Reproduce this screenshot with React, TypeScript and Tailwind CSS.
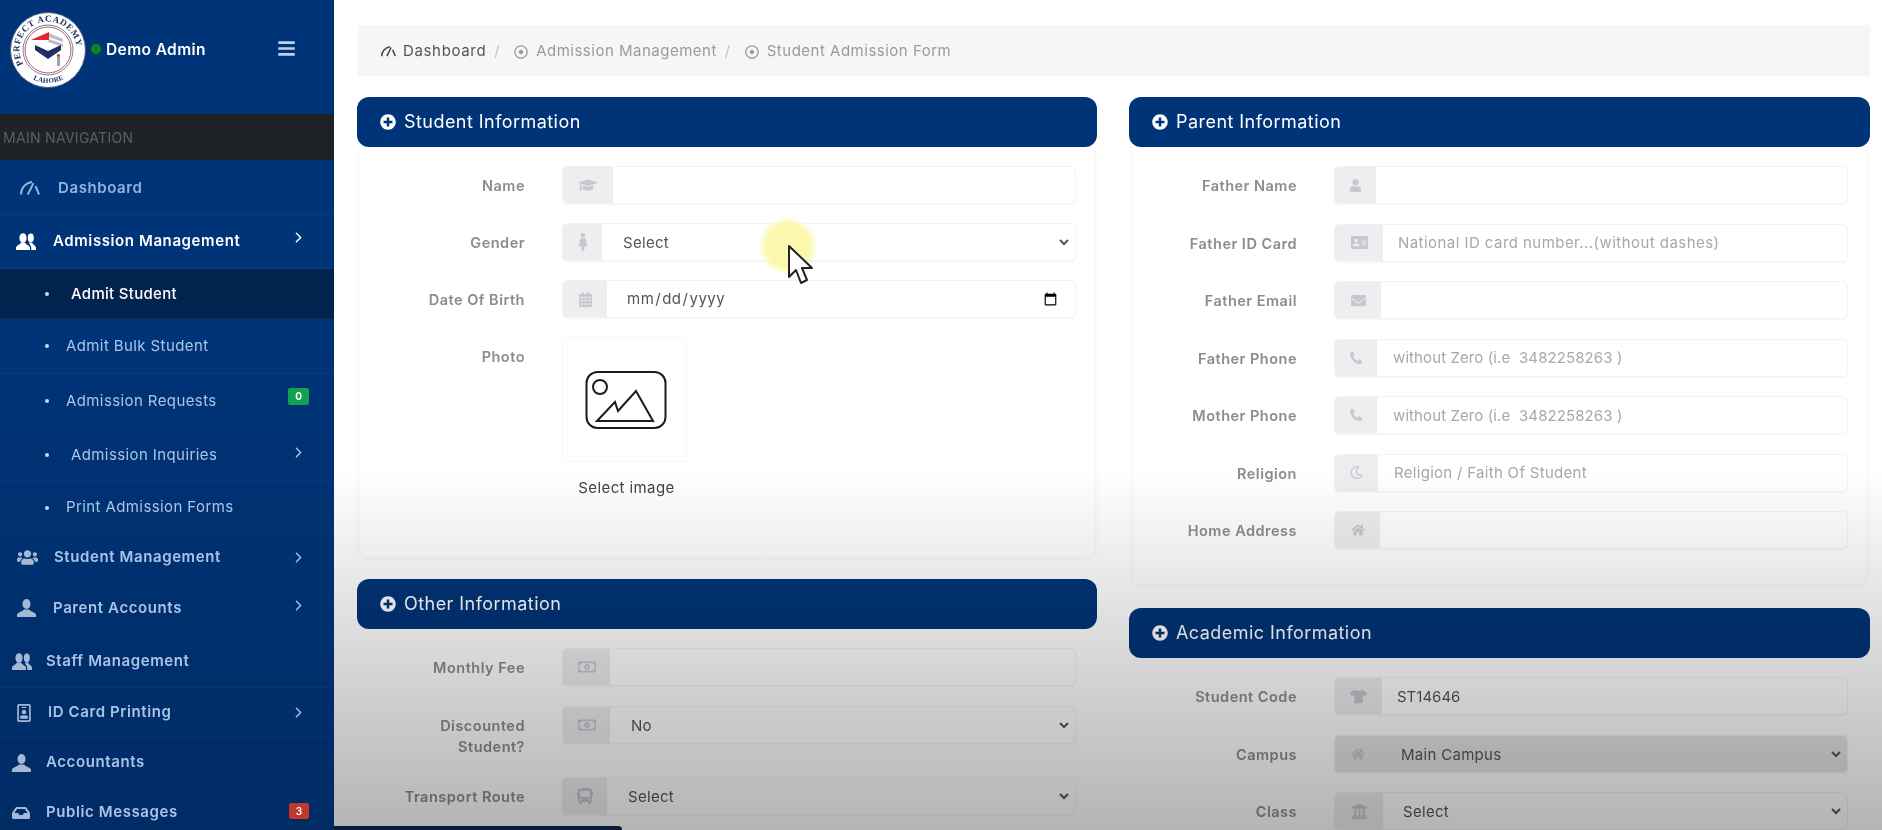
import type { ReactNode } from 'react';
import { ChevronRight } from 'lucide-react';
import {
  FaAddressCard,
  FaBars,
  FaBus,
  FaCalendarAlt,
  FaEnvelope,
  FaFemale,
  FaGraduationCap,
  FaHome,
  FaInbox,
  FaPhoneAlt,
  FaPlusCircle,
  FaRegDotCircle,
  FaRegIdBadge,
  FaRegMoneyBillAlt,
  FaRegMoon,
  FaTshirt,
  FaUniversity,
  FaUser,
  FaUsers,
} from 'react-icons/fa';

function Logo() {
  return (
    <svg width="76" height="76" viewBox="0 0 76 76" className="shrink-0">
      <defs>
        <path id="seal-top" d="M 13.3 52.3 A 28.5 28.5 0 1 1 62.7 52.3" />
        <path id="seal-bottom" d="M 14.7 61.3 A 33 33 0 0 0 61.3 61.3" />
      </defs>
      <circle cx="38" cy="38" r="37.5" fill="#ffffff" stroke="#4a5a86" strokeWidth="1" />
      <circle cx="38" cy="38" r="25" fill="#ffffff" stroke="#1d2f63" strokeWidth="0.6" />
      <circle cx="38" cy="38" r="23" fill="none" stroke="#c0565a" strokeWidth="1" />
      <text fontFamily="'Liberation Serif', serif" fontSize="9" fontWeight="700" fill="#1d2f63" letterSpacing="0.7">
        <textPath href="#seal-top">PERFECT ACADEMY</textPath>
      </text>
      <text fontFamily="'Liberation Serif', serif" fontSize="7" fontWeight="700" fill="#1d2f63" letterSpacing="0.3">
        <textPath href="#seal-bottom" startOffset="20%">LAHORE</textPath>
      </text>
      <path d="M21 28 L39 20 L39 28 Z" fill="#e0262e" />
      <path d="M39 21 L53 27 L53 30 L39 25 Z M39 27 L53 32 L53 35 L38 30 Z" fill="#b9bcc4" />
      <path d="M25 33 L38 39 L51 33 L51 38 L38 47 L25 38 Z" fill="#1d2f63" />
      <rect x="47" y="45" width="3" height="9" fill="#9aa3b5" />
      <circle cx="48.5" cy="43.5" r="1.5" fill="#e0262e" />
    </svg>
  );
}

function Gauge({ className }: { className: string }) {
  return (
    <svg viewBox="0 0 20 14" fill="none" stroke="currentColor" strokeWidth="2" className={className}>
      <path d="M1 13.5 C1 7 5.5 2 12 1" />
      <path d="M7.8 13.5 L13.5 2" />
      <path d="M15.5 5 L19 13.5" />
    </svg>
  );
}

function Bust({ className }: { className: string }) {
  return (
    <svg width="19" height="18" viewBox="0 0 19 18" fill="currentColor" className={`shrink-0 ${className}`}>
      <ellipse cx="9.5" cy="5" rx="4" ry="5" />
      <path d="M0 18 L0 15.5 C1 13 5 13 7 10.5 L12 10.5 C14 13 18 13 19 15.5 L19 18 Z" />
    </svg>
  );
}

function TwoUsers({ className }: { className: string }) {
  return (
    <svg width="20" height="17" viewBox="0 0 20 17" fill="currentColor" className={`shrink-0 ${className}`}>
      <ellipse cx="7" cy="5" rx="3.6" ry="4.8" />
      <path d="M0 17 L0 14.5 C0.8 12 4 12 5 9.5 L9 9.5 C10 12 13.2 12 14 14.5 L14 17 Z" />
      <ellipse cx="14.8" cy="5" rx="3" ry="4.4" />
      <path d="M15.2 17 L20 17 L20 14.5 C19.2 12.2 17 12 16 9.5 L13 9.5 C13 11 14.8 12 15.2 14.5 Z" />
    </svg>
  );
}

type NavItem = {
  label: string;
  height: string;
  rowClass: string;
  textClass: string;
  icon?: ReactNode;
  chevron?: string;
  badge?: ReactNode;
};

const mainText = 'font-semibold text-[15px] tracking-[0.6px] text-[#a9c4e6]';
const subText = 'font-normal text-[15px] tracking-[0.4px] text-[#a9c5ea]';

const navItems: NavItem[] = [
  { label: 'Dashboard', height: 'h-[54px]', rowClass: 'pl-[20px] gap-[18px]', textClass: 'mt-[2px] font-semibold text-[15px] tracking-[0.6px] text-[#8fb3e2]', icon: <Gauge className="w-[20px] shrink-0 text-[#8fb3e2]" /> },
  { label: 'Admission Management', height: 'h-[54px]', rowClass: 'pl-[16px] gap-[17px]', textClass: 'font-semibold text-[15px] tracking-[0.6px] text-white', icon: <TwoUsers className="text-white" />, chevron: '-translate-y-[4px] text-white' },
  { label: 'Admit Student', height: 'h-[50px] bg-[#03234f]', rowClass: 'pl-[45px] gap-[22px]', textClass: 'mt-[1px] font-medium text-[15px] tracking-[0.3px] text-white' },
  { label: 'Admit Bulk Student', height: 'h-[55px]', rowClass: 'pl-[45px] gap-[17px]', textClass: `mt-[1px] ${subText}` },
  { label: 'Admission Requests', height: 'h-[55px]', rowClass: 'pl-[45px] gap-[17px]', textClass: subText, badge: <span className="absolute top-[14px] left-[288px] flex h-[17px] w-[21px] items-center justify-center rounded-[2px] bg-[#12a150] text-[10px] font-bold text-white">0</span> },
  { label: 'Admission Inquiries', height: 'h-[53px]', rowClass: 'pl-[45px] gap-[22px]', textClass: subText, chevron: '-translate-y-[3px] text-[#a9c5ea]' },
  { label: 'Print Admission Forms', height: 'h-[52px]', rowClass: 'pl-[45px] gap-[17px]', textClass: subText },
  { label: 'Student Management', height: 'h-[48px]', rowClass: 'pl-[17px] gap-[16px]', textClass: mainText, icon: <FaUsers className="size-[21px] text-[#a5b9d6]" />, chevron: 'text-[#a9c4e6]' },
  { label: 'Parent Accounts', height: 'h-[53px]', rowClass: 'pl-[17px] gap-[17px]', textClass: mainText, icon: <Bust className="text-[#a5b9d6]" />, chevron: '-translate-y-[3px] text-[#a9c4e6]' },
  { label: 'Staff Management', height: 'h-[53px]', rowClass: 'pl-[12px] gap-[14px]', textClass: mainText, icon: <TwoUsers className="text-[#a5b9d6]" /> },
  { label: 'ID Card Printing', height: 'h-[50px]', rowClass: 'pl-[15px] gap-[15px]', textClass: mainText, icon: <FaRegIdBadge className="size-[18px] text-[#a5b9d6]" />, chevron: 'text-[#a9c4e6]' },
  { label: 'Accountants', height: 'h-[50px]', rowClass: 'pl-[12px] gap-[15px]', textClass: mainText, icon: <Bust className="text-[#a5b9d6]" /> },
  { label: 'Public Messages', height: 'h-[50px]', rowClass: 'pl-[12px] gap-[16px]', textClass: mainText, icon: <FaInbox className="size-[18px] text-[#a5b9d6]" />, badge: <span className="absolute top-[15px] left-[289px] flex h-[16px] w-[20px] items-center justify-center rounded-[2px] bg-[#c0392b] text-[10px] font-semibold text-white">3</span> },
];

function Sidebar() {
  return (
    <aside className="h-full w-[334px] shrink-0 bg-gradient-to-b from-[#003478] from-40% to-[#002c66]">
      <div className="flex h-[114px] items-start pt-[12px] pr-[38px] pl-[10px]">
        <Logo />
        <span className="mt-[32px] ml-[5px] size-[10px] rounded-full bg-[#0a8a1e]" />
        <span className="mt-[27px] ml-[5px] text-[15.5px] leading-[22px] font-semibold tracking-[0.4px] text-white">Demo Admin</span>
        <FaBars className="mt-[27px] ml-auto size-[19px] text-[#bcd2ef]" />
      </div>
      <div className="flex h-[46px] items-center bg-[#1f2226] pl-[3px] text-[14px] tracking-[0.3px] text-[#5b6068]">MAIN NAVIGATION</div>
      <nav className="pt-[1px]">
        {navItems.map((item) => (
          <div key={item.label} className={`relative flex items-center border-b border-white/[0.03] ${item.height} ${item.rowClass}`}>
            {item.icon ?? <span className="size-[4px] rounded-full bg-[#c5d8f0]" />}
            <span className={`whitespace-nowrap ${item.textClass}`}>{item.label}</span>
            {item.chevron && <ChevronRight strokeWidth={2} className={`absolute left-[290px] size-[17px] ${item.chevron}`} />}
            {item.badge}
          </div>
        ))}
      </nav>
    </aside>
  );
}

function CardHeader({ title }: { title: string }) {
  return (
    <div className="flex h-[50px] items-center gap-[8px] rounded-[12px] bg-[#003478] pb-[1px] pl-[23px] text-[18px] tracking-[0.45px] text-white">
      <FaPlusCircle className="size-[16px]" />
      {title}
    </div>
  );
}

const inputClass = 'h-full min-w-0 flex-1 bg-transparent text-[15px] text-[#555555] outline-none placeholder:text-[#a8a8a8]';

const labelClass = 'shrink-0 pt-[9px] text-right text-[14.5px] leading-[21px] font-semibold tracking-[0.5px] text-[#8c8c8c]';

function Row({ label, labelWidth, addon, icon, muted, children }: { label: ReactNode; labelWidth: string; addon: string; icon: ReactNode; muted?: boolean; children?: ReactNode }) {
  return (
    <div className="flex items-start gap-[37px]">
      <div className={`${labelWidth} ${labelClass}`}>{label}</div>
      <div className={`flex h-[38px] flex-1 overflow-hidden rounded-[5px] border border-[#f3f3f3] shadow-[0_1px_2px_rgba(0,0,0,0.04)] ${muted ? 'bg-[#e4e4e4]' : 'bg-white'}`}>
        <div className={`${addon} flex shrink-0 items-center justify-center ${muted ? '' : 'bg-[#eeeef0]'} text-[#c6c8d0]`}>{icon}</div>
        {children}
      </div>
    </div>
  );
}

function Field({ pad, placeholder, value }: { pad: string; placeholder?: string; value?: string }) {
  return <input readOnly placeholder={placeholder} value={value ?? ''} className={`${inputClass} ${pad}`} />;
}

function Choice({ pad, value }: { pad: string; value: string }) {
  return (
    <select defaultValue={value} className={`${inputClass} mr-[3px] pt-[1px] tracking-[0.3px] ${pad}`}>
      <option>{value}</option>
    </select>
  );
}

function Main() {
  const left = 'w-[165px]';
  const right = 'w-[164px]';
  return (
    <main className="min-w-0 flex-1 bg-white pt-[25px] pr-[12px] pl-[23px]">
      <div className="mb-[21px] ml-[1px] flex h-[51px] items-center bg-[#f6f6f7] pt-[2px] pl-[23px] text-[15px] tracking-[0.5px] text-[#9a9a9a]">
        <Gauge className="w-[15px] shrink-0 text-[#444444]" />
        <span className="ml-[7px] tracking-[0.65px] text-[#555555]">Dashboard</span>
        <span className="mx-[8px] text-[#c4c4c4]">/</span>
        <FaRegDotCircle className="ml-[6px] size-[14px]" />
        <span className="ml-[8px]">Admission Management</span>
        <span className="mx-[8px] text-[#c4c4c4]">/</span>
        <FaRegDotCircle className="ml-[6px] size-[14px]" />
        <span className="ml-[8px]">Student Admission Form</span>
      </div>

      <div className="grid grid-cols-[740px_741px] gap-x-[32px]">
        <div>
          <CardHeader title="Student Information" />
          <div className="mx-[3px] mb-[22px] flex h-[410px] flex-col gap-[19px] rounded-b-[8px] pt-[19px] pr-[18px] shadow-[0_1px_6px_rgba(0,0,0,0.06)]">
            <Row label="Name" labelWidth={left} addon="w-[50px]" icon={<FaGraduationCap className="size-[18px]" />}>
              <Field pad="px-4" />
            </Row>
            <Row label="Gender" labelWidth={left} addon="w-[39px]" icon={<FaFemale className="size-[18px]" />}>
              <Choice pad="pl-[17px]" value="Select" />
            </Row>
            <Row label="Date Of Birth" labelWidth={left} addon="w-[44px]" icon={<FaCalendarAlt className="size-[15px]" />}>
              <input type="date" className={`${inputClass} pt-[1px] pr-[15px] pl-[19px] tracking-[0.5px]`} />
            </Row>
            <div className="flex items-start gap-[37px]">
              <div className={`${left} ${labelClass}`}>Photo</div>
              <div className="w-[125px]">
                <div className="flex h-[125px] items-center justify-center border border-[#f7f7f7]">
                  <svg width="82" height="60" viewBox="0 0 82 60" fill="none" stroke="#1c1c1c" strokeWidth="2" className="translate-x-[1px]">
                    <rect x="1.5" y="2" width="79" height="56" rx="11" />
                    <ellipse cx="15" cy="17" rx="7" ry="7" />
                    <path d="M12 51 L30 32 L33 41 L51 21 L68 51 Z" />
                  </svg>
                </div>
                <div className="mt-[15px] translate-x-[2px] text-center text-[15px] tracking-[0.4px] whitespace-nowrap text-[#444444]">Select image</div>
              </div>
            </div>
          </div>

          <CardHeader title="Other Information" />
          <div className="mx-[3px] flex flex-col gap-[20px] pt-[19px] pr-[18px]">
            <Row label="Monthly Fee" labelWidth={left} addon="w-[47px]" icon={<FaRegMoneyBillAlt className="size-[18px]" />}>
              <Field pad="px-4" />
            </Row>
            <Row label={<>Discounted<br />Student?</>} labelWidth={left} addon="w-[47px]" icon={<FaRegMoneyBillAlt className="size-[18px]" />}>
              <Choice pad="pl-[17px]" value="No" />
            </Row>
            <Row label="Transport Route" labelWidth={left} addon="w-[44px]" icon={<FaBus className="size-[16px]" />}>
              <Choice pad="pl-[17px]" value="Select" />
            </Row>
          </div>
        </div>

        <div>
          <CardHeader title="Parent Information" />
          <div className="mx-[4px] mb-[23px] flex h-[438px] flex-col gap-[19.5px] rounded-b-[8px] pt-[19px] pr-[18px] shadow-[0_1px_6px_rgba(0,0,0,0.06)]">
            <Row label="Father Name" labelWidth={right} addon="w-[41px]" icon={<FaUser className="size-[13px]" />}>
              <Field pad="px-4" />
            </Row>
            <Row label="Father ID Card" labelWidth={right} addon="w-[48px]" icon={<FaAddressCard className="size-[17px]" />}>
              <Field pad="px-[15px] tracking-[0.45px]" placeholder="National ID card number...(without dashes)" />
            </Row>
            <Row label="Father Email" labelWidth={right} addon="w-[46px]" icon={<FaEnvelope className="size-[15px]" />}>
              <Field pad="px-4" />
            </Row>
            <Row label="Father Phone" labelWidth={right} addon="w-[42px]" icon={<FaPhoneAlt className="size-[12px]" />}>
              <Field pad="px-4 tracking-[0.1px]" placeholder="without Zero (i.e  3482258263 )" />
            </Row>
            <Row label="Mother Phone" labelWidth={right} addon="w-[42px]" icon={<FaPhoneAlt className="size-[12px]" />}>
              <Field pad="px-4 tracking-[0.1px]" placeholder="without Zero (i.e  3482258263 )" />
            </Row>
            <Row label="Religion" labelWidth={right} addon="w-[43px]" icon={<FaRegMoon className="size-[13px]" />}>
              <Field pad="px-4 tracking-[0.3px]" placeholder="Religion / Faith Of Student" />
            </Row>
            <Row label="Home Address" labelWidth={right} addon="w-[45px]" icon={<FaHome className="size-[14px]" />}>
              <Field pad="px-4" />
            </Row>
          </div>

          <CardHeader title="Academic Information" />
          <div className="mx-[4px] flex flex-col gap-[19.5px] pt-[19px] pr-[18px]">
            <Row label="Student Code" labelWidth={right} addon="w-[47px]" icon={<FaTshirt className="size-[17px]" />}>
              <Field pad="px-[15px]" value="ST14646" />
            </Row>
            <Row label="Campus" labelWidth={right} addon="w-[46px]" icon={<FaHome className="size-[14px]" />} muted>
              <Choice pad="pl-4" value="Main Campus" />
            </Row>
            <Row label="Class" labelWidth={right} addon="w-[48px]" icon={<FaUniversity className="size-[17px]" />}>
              <Choice pad="pl-4" value="Select" />
            </Row>
          </div>
        </div>
      </div>
    </main>
  );
}

export default function App() {
  return (
    <div className="relative flex h-[830px] w-full overflow-hidden bg-white font-['Inter','Open_Sans',sans-serif]">
      <Sidebar />
      <Main />

      {/* video fade over the lower half, main area only */}
      <div className="pointer-events-none absolute top-[470px] right-0 bottom-0 left-[334px] bg-gradient-to-b from-white to-[#b4b4b4] mix-blend-multiply" />

      {/* recording cursor */}
      <div className="pointer-events-none absolute top-[220px] left-[762px] size-[52px] rounded-full bg-[#fbf79a] opacity-80 blur-[2px]" />
      <svg className="pointer-events-none absolute top-[244px] left-[787px]" width="28" height="42" viewBox="0 0 28 42">
        <path d="M2 2 L2 33 L9 26 L14 39 L20 36 L15 24 L25 24 Z" fill="#ffffff" stroke="#222222" strokeWidth="2" strokeLinejoin="round" />
      </svg>

      {/* player bar peeking in at the bottom */}
      <div className="absolute bottom-0 left-[334px] h-[4px] w-[288px] rounded-tr-[4px] bg-[#0b1d3a]" />
    </div>
  );
}
